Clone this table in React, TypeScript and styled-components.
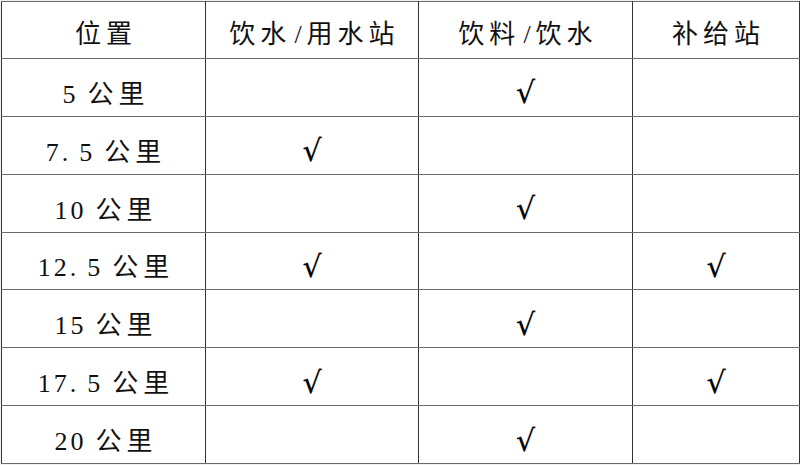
import styled, { createGlobalStyle } from "styled-components";

const GlobalStyle = createGlobalStyle`
  html, body {
    margin: 0;
    padding: 0;
    background: #f0f0f0;
  }
`;

const Page = styled.div`
  padding: 1px 0 0 1px;
  width: 800px;
  height: 465px;
  box-sizing: border-box;
`;

const Table = styled.table`
  width: 798px;
  height: 463px;
  border-collapse: collapse;
  table-layout: fixed;
  background: #ffffff;
  border: 1.5px solid #333;
  font-family: "Liberation Serif", "Noto Sans CJK SC", serif;
  color: #111;
`;

const Col = styled.col<{ $w: number }>`
  width: ${(p) => p.$w}px;
`;

const Row = styled.tr`
  height: 57px;
`;

const cellBase = `
  border-left: 1px solid #333;
  border-right: 1px solid #333;
  border-top: 1px solid #6a6a6a;
  border-bottom: 1px solid #6a6a6a;
  text-align: center;
  vertical-align: middle;
  line-height: 1;
  white-space: nowrap;
`;

const HeadCell = styled.th`
  ${cellBase}
  font-weight: 400;
  font-size: 26px;
  letter-spacing: 5px;
  padding: 10px 0 0 5px;
`;

const Slash = styled.span`
  letter-spacing: 5px;
  padding-left: 3px;
`;

const Cell = styled.td`
  ${cellBase}
  padding: 12px 0 0 0;
`;

const Num = styled.span`
  font-family: "Liberation Serif", serif;
  font-size: 26px;
  letter-spacing: 3px;
  margin-right: 9px;
`;

const Unit = styled.span`
  font-family: "Noto Sans CJK SC", sans-serif;
  font-size: 26px;
  letter-spacing: 5px;
  margin-right: -5px;
`;

const Check = styled.span`
  font-family: "DejaVu Sans", sans-serif;
  font-size: 30px;
  font-weight: 400;
  color: #000;
  display: inline-block;
  -webkit-text-stroke: 0.2px #000;
`;

const columns = [["饮水", "用水站"], ["饮料", "饮水"]];
const widths = [204, 213, 214, 167];

const rows: { km: string; marks: [boolean, boolean, boolean] }[] = [
  { km: "5", marks: [false, true, false] },
  { km: "7.5", marks: [true, false, false] },
  { km: "10", marks: [false, true, false] },
  { km: "12.5", marks: [true, false, true] },
  { km: "15", marks: [false, true, false] },
  { km: "17.5", marks: [true, false, true] },
  { km: "20", marks: [false, true, false] },
];

export default function App() {
  return (
    <Page>
      <GlobalStyle />
      <Table>
        <colgroup>
          {widths.map((w, i) => (
            <Col key={i} $w={w} />
          ))}
        </colgroup>
        <thead>
          <Row>
            <HeadCell>位置</HeadCell>
            {columns.map(([a, b]) => (
              <HeadCell key={a + b}>
                {a}
                <Slash>/</Slash>
                {b}
              </HeadCell>
            ))}
            <HeadCell>补给站</HeadCell>
          </Row>
        </thead>
        <tbody>
          {rows.map((r) => (
            <Row key={r.km}>
              <Cell>
                <Num>{r.km.replace(".", ".\u2009")}</Num>
                <Unit>公里</Unit>
              </Cell>
              {r.marks.map((m, i) => (
                <Cell key={i}>{m ? <Check>√</Check> : null}</Cell>
              ))}
            </Row>
          ))}
        </tbody>
      </Table>
    </Page>
  );
}
